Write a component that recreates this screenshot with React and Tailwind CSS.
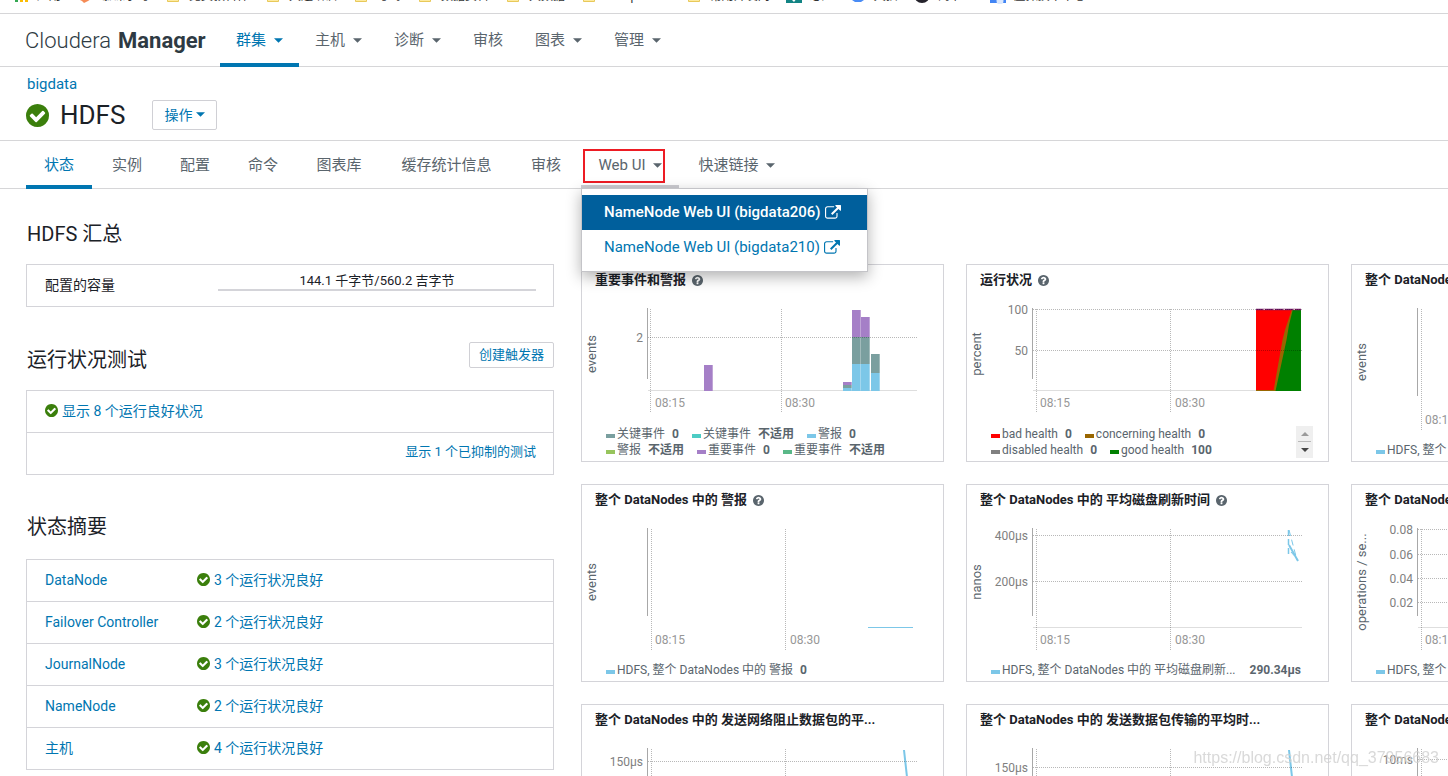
import React from "react";

const CHECK =
  "M1412 734q0-28-18-46l-91-90q-19-19-45-19t-45 19l-408 407-226-226q-19-19-45-19t-45 19l-91 90q-18 18-18 46 0 27 18 45l362 362q19 19 45 19 27 0 46-19l543-543q18-18 18-45zm252 162q0 209-103 385.5t-279.5 279.5-385.5 103-385.5-103-279.5-279.5-103-385.5 103-385.5 279.5-279.5 385.5-103 385.5 103 279.5 279.5 103 385.5z";
const QUESTION =
  "M1024 1376v-192q0-14-9-23t-23-9h-192q-14 0-23 9t-9 23v192q0 14 9 23t23 9h192q14 0 23-9t9-23zm256-672q0-88-55.5-163t-138.5-116-170-41q-243 0-371 213-15 24 8 42l132 100q7 6 19 6 16 0 25-12 53-68 86-92 34-24 86-24 48 0 85.5 26t37.5 59q0 38-20 61t-68 45q-63 28-115.5 86.5t-52.5 125.5v36q0 14 9 23t23 9h192q14 0 23-9t9-23q0-19 21.5-49.5t54.5-49.5q32-18 49-28.5t46-35 44.5-48 28-60.5 12.5-81zm384 192q0 209-103 385.5t-279.5 279.5-385.5 103-385.5-103-279.5-279.5-103-385.5 103-385.5 279.5-279.5 385.5-103 385.5 103 279.5 279.5 103 385.5z";
const EXTERNAL =
  "M1408 928v320q0 119-84.5 203.5t-203.5 84.5h-832q-119 0-203.5-84.5t-84.5-203.5v-832q0-119 84.5-203.5t203.5-84.5h704q14 0 23 9t9 23v64q0 14-9 23t-23 9h-704q-66 0-113 47t-47 113v832q0 66 47 113t113 47h832q66 0 113-47t47-113v-320q0-14 9-23t23-9h64q14 0 23 9t9 23zm384-864v512q0 26-19 45t-45 19-45-19l-176-176-652 652q-10 10-23 10t-23-10l-114-114q-10-10-10-23t10-23l652-652-176-176q-19-19-19-45t19-45 45-19h512q26 0 45 19t19 45z";

function CheckIcon({ className }) {
  return (
    <svg viewBox="128 128 1536 1536" className={className} fill="#3b7f0c" aria-hidden="true">
      <path d={CHECK} />
    </svg>
  );
}

function Caret() {
  return (
    <svg viewBox="0 0 10 5" className="h-[5px] w-[9px] shrink-0" fill="currentColor" aria-hidden="true">
      <path d="M0 0h10L5 5z" />
    </svg>
  );
}

const FOLDER = "folder";
const bookmarks = [
  { text: "应用", icon: "apps" },
  { text: "慕课学习", icon: "paw" },
  { text: "免费教科件", icon: FOLDER },
  { text: "大连培训", icon: FOLDER },
  { text: "考驾", icon: FOLDER },
  { text: "数据资料", icon: FOLDER },
  { text: "大数据", icon: FOLDER },
  { text: "Javaphones", icon: FOLDER },
  { text: "常用开发网", icon: FOLDER },
  { text: "必应", icon: "teal" },
  { text: "天猫", icon: "cloud" },
  { text: "简书王", icon: "dark" },
  { text: "虚拟技术中心", icon: "blue" },
];

function BookmarkIcon({ kind }) {
  return (
    <svg viewBox="0 0 16 16" className="h-4 w-4 shrink-0" aria-hidden="true">
      {kind === "apps" && (
        <g>
          <rect x="2" y="11" width="3" height="3" fill="#34a853" />
          <rect x="7" y="11" width="3" height="3" fill="#fbbc05" />
          <rect x="12" y="11" width="3" height="3" fill="#fbbc05" />
        </g>
      )}
      {kind === "paw" && <path d="M2 5h12v6l-3 2-2 1-2 1-2-2-2-1z" fill="#f58b56" />}
      {kind === FOLDER && <path d="M2.500 4h11v9.500h-11z" fill="#fdeaa0" stroke="#e8c95a" />}
      {kind === "teal" && (
        <g>
          <rect width="16" height="15" fill="#128484" />
          <path d="M6 12l5-2-3 4z" fill="#fff" />
        </g>
      )}
      {kind === "cloud" && <path d="M2 4h12v8l-3 2H5l-3-2z" fill="#4a8cf5" />}
      {kind === "dark" && <circle cx="8" cy="7" r="8" fill="#25232c" />}
      {kind === "blue" && (
        <g>
          <rect width="16" height="15" fill="#4285f4" />
          <circle cx="10" cy="13" r="3.500" fill="#dbe8fd" />
        </g>
      )}
    </svg>
  );
}

const mainNav = [
  { text: "群集", caret: true, active: true },
  { text: "主机", caret: true },
  { text: "诊断", caret: true },
  { text: "审核" },
  { text: "图表", caret: true },
  { text: "管理", caret: true },
];

const tabs = [
  { text: "状态", width: "min-w-[66px]", active: true },
  { text: "实例", width: "min-w-[66px]" },
  { text: "配置", width: "min-w-[66px]" },
  { text: "命令", width: "min-w-[66px]" },
  { text: "图表库", width: "min-w-[82px]" },
  { text: "缓存统计信息", width: "min-w-[129px]" },
  { text: "审核", width: "min-w-[66px]" },
  { text: "Web UI", width: "min-w-[98px]", caret: true, menu: true },
  { text: "快速链接", width: "min-w-[111px]", caret: true },
];

function WebUiMenu() {
  return (
    <div className="absolute top-[47px] left-0 z-20 flex w-[287px] flex-col border border-[#c4c4c8] bg-white py-[6px] shadow-[0_5px_14px_rgba(0,0,0,0.3)]">
      <a href="#nn206" className="flex h-[35px] items-center gap-1 bg-[#005f9c] px-[22px] text-[15px] font-medium whitespace-nowrap text-white">
        NameNode Web UI (bigdata206)
        <ExternalIcon />
      </a>
      <a href="#nn210" className="flex h-[35px] items-center gap-1 px-[22px] text-[15px] whitespace-nowrap text-[#0076b1]">
        NameNode Web UI (bigdata210)
        <ExternalIcon />
      </a>
    </div>
  );
}

function ExternalIcon() {
  return (
    <svg viewBox="0 0 1792 1792" className="h-4 w-4 shrink-0" fill="currentColor" aria-hidden="true">
      <path d={EXTERNAL} />
    </svg>
  );
}

const GRID = { stroke: "#000", strokeOpacity: "0.28", strokeDasharray: "1 1" };

function Plot({ tall, unit, unitY, ticks = [], firstX = 69, secondX = 203, secondLabelX = 208, baseline = true, label, children }) {
  const base = tall ? 110 : 93;
  return (
    <svg
      className={tall ? "h-36 w-full overflow-hidden" : "h-32 w-full overflow-hidden"}
      fontFamily="Roboto, 'Noto Sans CJK SC', sans-serif"
      role="img"
      aria-label={label}
    >
      {ticks.map((t) => (
        <text key={t.text} x="61" y={t.y + 5} textAnchor="end" fontSize="12" fill="#808080">
          {t.text}
        </text>
      ))}
      {baseline && <path d={`M66 ${base + 0.5}H335`} stroke="#dedede" />}
      {children}
      {ticks.map((t) => (
        <path key={t.text} d={`M66 ${t.y + 0.5}H335`} {...GRID} />
      ))}
      <path d={`M65.500 11V${base - 11}`} stroke="#a8a8a8" />
      <path d={`M${firstX + 0.5} 12V${base + 23}`} {...GRID} />
      <path d={`M${secondX + 0.5} 12V${base + 23}`} {...GRID} />
      <text x="73" y={base + 17} fontSize="12" fill="#979797">08:15</text>
      <text x={secondLabelX} y={base + 17} fontSize="12" fill="#979797">08:30</text>
      <text transform={`translate(14 ${unitY}) rotate(-90)`} textAnchor="middle" fontSize="13" fill="#5a656d">
        {unit}
      </text>
    </svg>
  );
}

function Series({ color, name, value, wide }) {
  return (
    <span className="flex items-center whitespace-nowrap">
      <svg viewBox="0 0 9 4" className="mt-[3px] mr-[2px] h-1 w-[9px]" aria-hidden="true">
        <rect width="9" height="4" fill={color} />
      </svg>
      {name}
      {value && <b className={wide ? "ml-[14px] font-bold" : "ml-[7px] font-bold"}>{value}</b>}
    </span>
  );
}

function ChartCard({ title, help, plot, legend, scroller, wide }) {
  return (
    <section className="flex min-w-0 flex-col border border-[#d4d4d9] bg-white">
      <h3 className="flex h-8 items-center gap-[6px] overflow-hidden pb-[2px] pl-[13px] text-[13px] font-bold whitespace-nowrap text-[#1b2127]">
        {title}
        {help && (
          <button type="button" aria-label="帮助">
            <svg viewBox="128 128 1536 1536" className="h-[11px] w-[11px]" fill="#5a656d" aria-hidden="true">
              <path d={QUESTION} />
            </svg>
          </button>
        )}
      </h3>
      {plot}
      <div className="flex justify-between pt-px pr-[15px] pb-[3px] pl-6 text-xs leading-4 text-[#5a656d]">
        <div className="flex flex-col">
          {legend.map((row, i) => (
            <div key={i} className="flex gap-[13px]">
              {row.map((s, j) => (
                <Series key={j} color={s[0]} name={s[1]} value={s[2]} wide={wide} />
              ))}
            </div>
          ))}
        </div>
        {scroller && (
          <div className="flex w-[17px] flex-col items-center bg-[#efefef]">
            <button type="button" aria-label="上一页" className="flex h-4 w-[13px] items-center justify-center border-b border-[#b9b9b9]">
              <svg viewBox="0 0 8 4" className="h-1 w-2" fill="#9a9a9a"><path d="M0 4h8L4 0z" /></svg>
            </button>
            <button type="button" aria-label="下一页" className="flex h-4 w-[13px] items-center justify-center">
              <svg viewBox="0 0 8 4" className="h-1 w-2" fill="#444"><path d="M0 0h8L4 4z" /></svg>
            </button>
          </div>
        )}
      </div>
    </section>
  );
}

const SKY = "#7cc7e8";
const PURPLE = "#a57fc7";
const SLATE = "#7a9f9f";

function EventBars() {
  const bars = [
    [122, 68, 94, PURPLE],
    [261, 85, 88, PURPLE],
    [261, 88, 91, SLATE],
    [261, 91, 94, SKY],
    [270, 13, 40, PURPLE],
    [270, 40, 67, SLATE],
    [270, 67, 94, SKY],
    [279, 20, 40, PURPLE],
    [279, 40, 67, SLATE],
    [279, 67, 94, SKY],
    [289, 57, 76, SLATE],
    [289, 76, 94, SKY],
  ];
  return bars.map(([x, y0, y1, c]) => (
    <rect key={`${x}-${y0}`} x={x} y={y0} width="8.700" height={y1 - y0} fill={c} />
  ));
}

function HealthArea() {
  return (
    <g>
      <rect x="289" y="12" width="45" height="82" fill="#ff0000" />
      <path d="M306.500 94L315.500 43 318 33 325 12 334 12 334 94z" fill="#996600" />
      <path d="M308.500 94L319.500 43 322 28 326 12H334V94z" fill="#008000" />
      <path d="M289 12.500H334" stroke="#7a1a6a" strokeWidth="1.500" />
      <path d="M289 12.500H334" stroke="#e0b0c0" strokeDasharray="2 8" strokeDashoffset="-7" />
      <path d="M289 93.500H307" stroke="#996600" />
    </g>
  );
}

const charts = [
  {
    title: "重要事件和警报",
    help: true,
    plot: (
      <Plot label="重要事件和警报" unit="events" unitY={57} ticks={[{ text: "2", y: 40 }]} firstX={68} secondX={199} secondLabelX={203}>
        <EventBars />
      </Plot>
    ),
    legend: [
      [[SLATE, "关键事件", "0"], ["#4dccc4", "关键事件", "不适用"], [SKY, "警报", "0"]],
      [["#97c45c", "警报", "不适用"], [PURPLE, "重要事件", "0"], ["#5ab888", "重要事件", "不适用"]],
    ],
  },
  {
    title: "运行状况",
    help: true,
    scroller: true,
    plot: (
      <Plot label="运行状况" unit="percent" unitY={57} ticks={[{ text: "100", y: 12 }, { text: "50", y: 53 }]}>
        <HealthArea />
      </Plot>
    ),
    legend: [
      [["#ff0000", "bad health", "0"], ["#996600", "concerning health", "0"]],
      [["#808080", "disabled health", "0"], ["#008000", "good health", "100"]],
    ],
  },
  {
    title: "整个 DataNodes 中的 关键事件",
    plot: <Plot label="整个 DataNodes 中的 关键事件" tall baseline={false} unit="events" unitY={65} />,
    legend: [[[SKY, "HDFS, 整个 DataNodes 中的 关键事件", "0"]]],
  },
  {
    title: "整个 DataNodes 中的 警报",
    help: true,
    plot: (
      <Plot label="整个 DataNodes 中的 警报" tall baseline={false} unit="events" unitY={65}>
        <path d="M286 110.500H331" stroke={SKY} />
      </Plot>
    ),
    legend: [[[SKY, "HDFS, 整个 DataNodes 中的 警报", "0"]]],
  },
  {
    title: "整个 DataNodes 中的 平均磁盘刷新时间",
    help: true,
    wide: true,
    plot: (
      <Plot label="平均磁盘刷新时间" tall unit="nanos" unitY={65} ticks={[{ text: "400µs", y: 18 }, { text: "200µs", y: 64 }]}>
        <g fill="none" stroke={SKY}>
          <path d="M321.500 13V38" strokeDasharray="6 3" strokeWidth="1.500" />
          <path d="M324 35L331 43" strokeDasharray="5 3" />
          <path d="M322 13L330 43" strokeDasharray="6 4" />
          <path d="M322 28L331 44" strokeWidth="2" />
        </g>
      </Plot>
    ),
    legend: [[[SKY, "HDFS, 整个 DataNodes 中的 平均磁盘刷新...", "290.34µs"]]],
  },
  {
    title: "整个 DataNodes 中的 总读取次数",
    plot: (
      <Plot
        label="总读取次数"
        tall
        unit="operations / se..."
        unitY={65}
        ticks={[{ text: "0.08", y: 12 }, { text: "0.06", y: 37 }, { text: "0.04", y: 61 }, { text: "0.02", y: 85 }]}
      />
    ),
    legend: [[[SKY, "HDFS, 整个 DataNodes 中的 总读取次数", "0"]]],
  },
  {
    title: "整个 DataNodes 中的 发送网络阻止数据包的平...",
    plot: (
      <Plot label="发送网络阻止数据包的平均时间" tall unit="nanos" unitY={65} ticks={[{ text: "150µs", y: 24 }]}>
        <path d="M322 13L325 40 329 90" fill="none" stroke={SKY} strokeWidth="2" />
      </Plot>
    ),
    legend: [[[SKY, "HDFS, 整个 DataNodes 中的 发送网络", "0"]]],
  },
  {
    title: "整个 DataNodes 中的 发送数据包传输的平均时...",
    plot: (
      <Plot label="发送数据包传输的平均时间" tall unit="nanos" unitY={65} ticks={[{ text: "150µs", y: 30 }]}>
        <path d="M322 13L325 40 329 90" fill="none" stroke={SKY} strokeWidth="2" />
      </Plot>
    ),
    legend: [[[SKY, "HDFS, 整个 DataNodes 中的 发送数据包", "0"]]],
  },
  {
    title: "整个 DataNodes 中的 平均心跳时间",
    plot: <Plot label="平均心跳时间" tall unit="nanos" unitY={65} ticks={[{ text: "10ms", y: 22 }]} />,
    legend: [[[SKY, "HDFS, 整个 DataNodes 中的 平均心跳", "0"]]],
  },
];

const roles = [
  ["DataNode", "3 个运行状况良好"],
  ["Failover Controller", "2 个运行状况良好"],
  ["JournalNode", "3 个运行状况良好"],
  ["NameNode", "2 个运行状况良好"],
  ["主机", "4 个运行状况良好"],
];

export default function App() {
  return (
    <div className="flex h-screen flex-col overflow-hidden bg-white font-['Roboto','Noto_Sans_CJK_SC',sans-serif] text-[#1b2127]">
      <nav aria-label="书签" className="flex h-[14px] shrink-0 items-end gap-4 overflow-hidden border-b border-[#d6d6d8] pb-[9px] pl-[13px] text-xs leading-4 text-[#333]">
        {bookmarks.map((b) => (
          <a key={b.text} href="#bookmark" className="flex shrink-0 items-center gap-2 whitespace-nowrap">
            <BookmarkIcon kind={b.icon} />
            {b.text}
          </a>
        ))}
      </nav>

      <header className="flex h-[53px] shrink-0 border-b border-[#d6d6d8] pl-[25px]">
        <a href="#home" className="flex w-[195px] items-center gap-[7px] text-[22px] font-light whitespace-nowrap text-[#2e3a43]">
          Cloudera <b className="font-bold">Manager</b>
        </a>
        <nav aria-label="主导航" className="flex text-[15px]">
          {mainNav.map((n) => (
            <button
              key={n.text}
              type="button"
              className={
                n.active
                  ? "-mb-px flex items-center gap-2 border-b-4 border-[#0076b1] px-4 pt-[3px] text-[#0076b1]"
                  : "-mb-px flex items-center gap-2 border-b-4 border-transparent px-4 pt-[3px] text-[#5a656d]"
              }
            >
              {n.text}
              {n.caret && <Caret />}
            </button>
          ))}
        </nav>
      </header>

      <div className="flex h-[74px] shrink-0 flex-col border-b border-[#d6d6d8] pt-[7px] pl-[26px]">
        <a href="#cluster" className="self-start pl-px text-[15px] leading-5 text-[#0076b1]">bigdata</a>
        <div className="mt-[6px] flex h-[30px] items-center">
          <CheckIcon className="h-[23px] w-[23px]" />
          <h1 className="ml-[11px] text-[26px] leading-[30px]">HDFS</h1>
          <button type="button" className="ml-[27px] flex h-[30px] items-center gap-1 rounded-xs border border-[#d0d0d5] px-[11px] pb-px text-sm text-[#0076b1]">
            操作
            <Caret />
          </button>
        </div>
      </div>

      <nav aria-label="服务" className="flex h-12 shrink-0 gap-[2px] border-b border-[#d6d6d8] pl-[26px] text-[15px] text-[#5a656d]">
        {tabs.map((t) => (
          <div key={t.text} className="relative -mb-px flex">
            <button
              type="button"
              className={[
                "flex items-center justify-center gap-[7px] border-b-4 pt-[5px] whitespace-nowrap",
                t.width,
                t.active ? "border-[#0076b1] text-[#0076b1]" : t.menu ? "border-[#cdcdd2]" : "border-transparent",
              ].join(" ")}
            >
              {t.text}
              {t.caret && <Caret />}
            </button>
            {t.menu && (
              <>
                <span className="pointer-events-none absolute top-2 left-[2px] h-[34px] w-[82px] border-2 border-[#ed1c24]" />
                <WebUiMenu />
              </>
            )}
          </div>
        ))}
      </nav>

      <main className="flex min-h-0 flex-1 gap-[27px] overflow-hidden pl-[26px]">
        <div className="w-[528px] shrink-0 pt-[29px]">
          <section>
            <h2 className="mb-[14px] pl-px text-xl leading-8">HDFS 汇总</h2>
            <div className="flex h-[43px] items-center border border-[#d4d4d9] pr-[17px] pb-[2px] pl-[18px] text-sm">
              <span className="w-[173px]">配置的容量</span>
              <span className="mb-[5px] flex-1 border-b-2 border-[#d4d4d9] text-center text-[13px] leading-4">
                144.1 千字节/560.2 吉字节
              </span>
            </div>
          </section>

          <section className="mt-[35px]">
            <div className="mb-[14px] flex h-[34px] justify-between">
              <h2 className="self-end pl-px text-xl leading-8">运行状况测试</h2>
              <button type="button" className="h-[26px] rounded-xs border border-[#d0d0d5] px-[9px] text-[13px] text-[#0076b1]">
                创建触发器
              </button>
            </div>
            <div className="flex flex-col border border-[#d4d4d9] text-sm text-[#0076b1]">
              <a href="#good" className="flex h-[42px] items-center gap-1 border-b border-[#d4d4d9] px-[18px] pb-[2px]">
                <CheckIcon className="h-[13px] w-[13px]" />
                显示 8 个运行良好状况
              </a>
              <a href="#suppressed" className="flex h-[41px] items-center self-end px-[17px] pb-[2px] text-[13px]">
                显示 1 个已抑制的测试
              </a>
            </div>
          </section>

          <section className="mt-9">
            <h2 className="mb-4 pl-px text-xl leading-8">状态摘要</h2>
            <div className="border border-[#d4d4d9]">
              <table className="w-full border-separate border-spacing-0 text-sm text-[#0076b1]">
                <tbody>
                  {roles.map(([role, status], i) => {
                    const cell =
                      i < roles.length - 1
                        ? "h-[42px] border-b border-[#d4d4d9] p-0 pb-[2px]"
                        : "h-[41px] p-0 pb-[2px]";
                    return (
                      <tr key={role}>
                        <td className={`${cell} w-[170px]`}>
                          <a href="#role" className="pl-[18px]">{role}</a>
                        </td>
                        <td className={cell}>
                          <a href="#status" className="flex items-center gap-1">
                            <CheckIcon className="h-[13px] w-[13px]" />
                            {status}
                          </a>
                        </td>
                      </tr>
                    );
                  })}
                </tbody>
              </table>
            </div>
          </section>
        </div>

        <div className="min-w-0 flex-1 overflow-hidden pt-[75px]">
          <div className="grid grid-cols-[repeat(3,363px)] gap-[22px]">
            {charts.map((c) => (
              <ChartCard key={c.title} {...c} />
            ))}
          </div>
        </div>
      </main>

      <p className="pointer-events-none fixed right-[9px] bottom-[6px] z-10 font-['Liberation_Sans',sans-serif] text-base text-[#cfcfcf]/80">
        https://blog.csdn.net/qq_37956683
      </p>
    </div>
  );
}
